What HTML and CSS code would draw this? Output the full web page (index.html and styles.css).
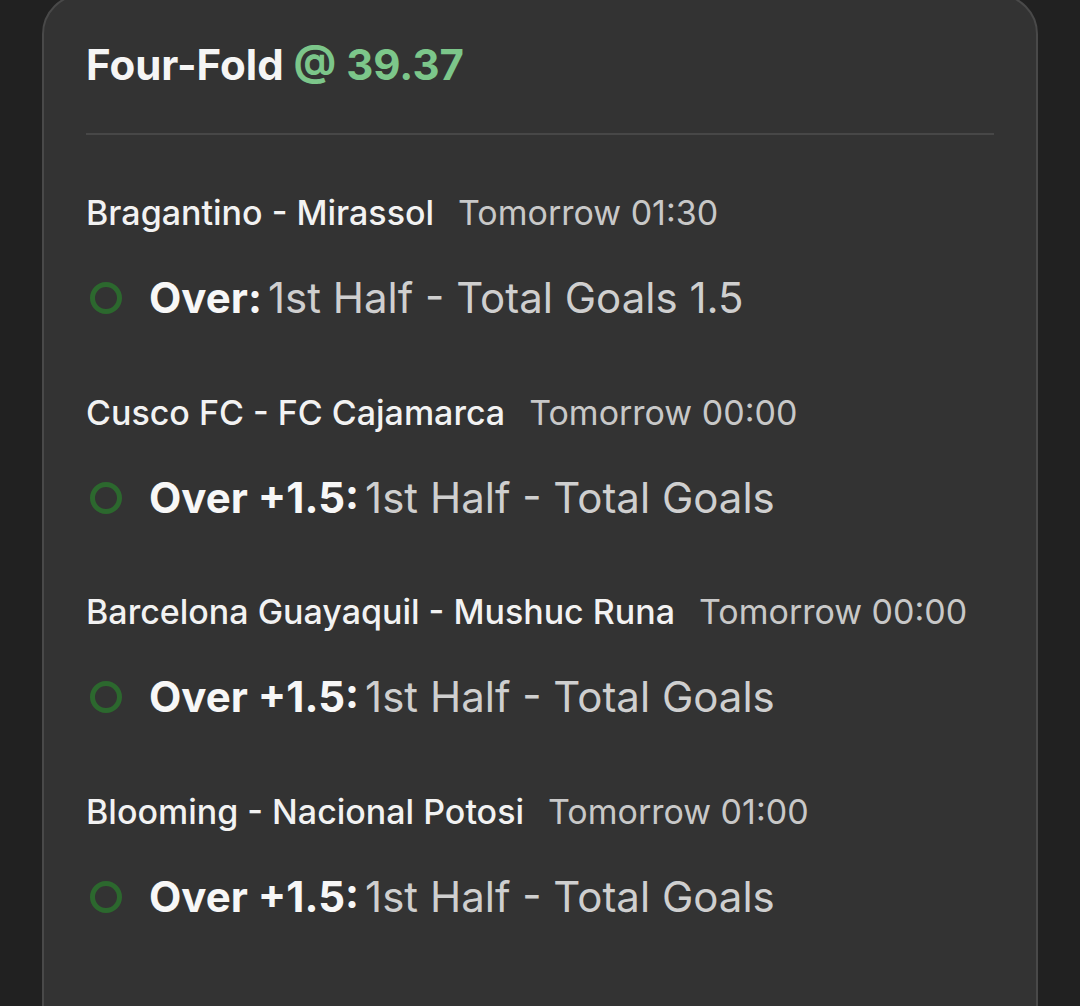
FILE: index.html
```html
<!DOCTYPE html>
<html lang="en">
<head>
    <meta charset="UTF-8">
    <meta name="viewport" content="width=device-width, initial-scale=1.0">
    <title>Four-Fold</title>
    <link rel="stylesheet" href="styles.css">
</head>
<body>
    <div class="card">
        <h1 class="title">Four-Fold <span class="odds">@ 39.37</span></h1>
        <div class="selections">
            <div class="selection">
                <div class="match">
                    <span class="teams">Bragantino - Mirassol</span>
                    <span class="time">Tomorrow 01:30</span>
                </div>
                <div class="bet">
                    <span class="status"></span>
                    <span class="pick">Over:</span>
                    <span class="market">1st Half - Total Goals 1.5</span>
                </div>
            </div>
            <div class="selection">
                <div class="match">
                    <span class="teams">Cusco FC - FC Cajamarca</span>
                    <span class="time">Tomorrow 00:00</span>
                </div>
                <div class="bet">
                    <span class="status"></span>
                    <span class="pick">Over +1.5:</span>
                    <span class="market">1st Half - Total Goals</span>
                </div>
            </div>
            <div class="selection">
                <div class="match">
                    <span class="teams">Barcelona Guayaquil - Mushuc Runa</span>
                    <span class="time">Tomorrow 00:00</span>
                </div>
                <div class="bet">
                    <span class="status"></span>
                    <span class="pick">Over +1.5:</span>
                    <span class="market">1st Half - Total Goals</span>
                </div>
            </div>
            <div class="selection">
                <div class="match">
                    <span class="teams">Blooming - Nacional Potosi</span>
                    <span class="time">Tomorrow 01:00</span>
                </div>
                <div class="bet">
                    <span class="status"></span>
                    <span class="pick">Over +1.5:</span>
                    <span class="market">1st Half - Total Goals</span>
                </div>
            </div>
        </div>
    </div>
</body>
</html>
```

FILE: styles.css
```css
body {
    font-family: Inter, "Noto Sans", sans-serif;
    background-color: #212121;
    margin: 0;
    padding: 0;
    height: 1006px;
    overflow: hidden;
}

.card {
    background-color: #333333;
    border: 2px solid #494949;
    border-radius: 40px;
    margin: -6px 0 0 42px;
    width: 908px;
    height: 1100px;
    padding: 0 42px;
}

.title {
    margin: 0;
    padding-top: 44px;
    height: 139px;
    box-sizing: border-box;
    border-bottom: 2px solid #474747;
    font-size: 42px;
    font-weight: 700;
    color: #f5f5f5;
    line-height: 50px;
}

.odds {
    color: #7cc68a;
}

.selections {
    padding-top: 58px;
}

.selection {
    height: 199.6px;
}

.match {
    display: flex;
    gap: 24px;
    font-size: 34px;
    line-height: 40px;
}

.teams {
    color: #f2f2f2;
    font-weight: 500;
}

.time {
    color: #c8c8c8;
}

.bet {
    display: flex;
    align-items: center;
    margin-top: 40px;
    font-size: 42px;
    line-height: 50px;
}

.status {
    flex-shrink: 0;
    width: 22px;
    height: 22px;
    border: 5px solid #2c682e;
    border-radius: 50%;
    margin: 0 27px 0 4px;
}

.pick {
    color: #f7f7f7;
    font-weight: 700;
    margin-right: 6px;
}

.market {
    color: #cfcfcf;
}
```
